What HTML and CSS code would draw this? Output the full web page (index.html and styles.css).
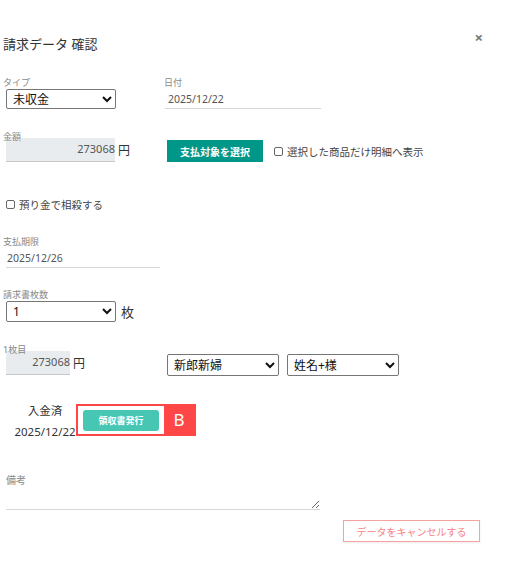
FILE: index.html
```html
<!DOCTYPE html>
<html lang="ja">
<head>
<meta charset="utf-8">
<link rel="stylesheet" href="styles.css">
</head>
<body>
<div class="modal">
  <div class="header">
    <h1 class="title">請求データ 確認</h1>
    <span class="close">×</span>
  </div>

  <div class="row row-type">
    <div class="col col-left">
      <div class="label">タイプ</div>
      <select class="sel sel-type"><option>未収金</option></select>
    </div>
    <div class="col">
      <div class="label">日付</div>
      <div class="line-input w155">2025/12/22</div>
    </div>
  </div>

  <div class="row row-amount">
    <div class="col col-left">
      <div class="label label-over">金額</div>
      <div class="amount-wrap">
        <div class="amount w109">273068</div><span class="yen">円</span>
      </div>
    </div>
    <div class="col col-btn">
      <button class="btn-green">支払対象を選択</button>
      <label class="check"><span class="box"></span>選択した商品だけ明細へ表示</label>
    </div>
  </div>

  <div class="row row-offset">
    <label class="check check-lg"><span class="box"></span>預り金で相殺する</label>
  </div>

  <div class="row row-due">
    <div class="col">
      <div class="label">支払期限</div>
      <div class="line-input w154">2025/12/26</div>
    </div>
  </div>

  <div class="row row-count">
    <div class="col">
      <div class="label">請求書枚数</div>
      <div class="amount-wrap">
        <select class="sel sel-type"><option>1</option></select><span class="yen mai">枚</span>
      </div>
    </div>
  </div>

  <div class="row row-first">
    <div class="col col-left">
      <div class="label label-over">1枚目</div>
      <div class="amount-wrap">
        <div class="amount w64">273068</div><span class="yen">円</span>
      </div>
    </div>
    <div class="col col-selects">
      <select class="sel sel-name"><option>新郎新婦</option></select>
      <select class="sel sel-name"><option>姓名+様</option></select>
    </div>
  </div>

  <div class="row row-paid">
    <div class="paid">
      <div class="paid-status">入金済</div>
      <div class="paid-date">2025/12/22</div>
    </div>
    <div class="marked">
      <div class="marked-inner"><button class="btn-receipt">領収書発行</button></div>
      <div class="marked-tag">B</div>
    </div>
  </div>

  <div class="row row-note">
    <div class="col">
      <div class="label label-note">備考</div>
      <textarea class="note"></textarea>
    </div>
  </div>

  <div class="footer">
    <button class="btn-cancel">データをキャンセルする</button>
  </div>
</div>
</body>
</html>
```
FILE: styles.css
```css
* { box-sizing: border-box; }
html, body { margin: 0; padding: 0; background: #fff; }
body {
  font-family: "Noto Sans", "Noto Sans CJK JP", sans-serif;
  color: #333;
  width: 521px;
  height: 567px;
  overflow: hidden;
}
.modal { padding: 0 0 0 3px; }

.header {
  display: flex;
  justify-content: space-between;
  align-items: flex-start;
  padding-top: 34px;
  padding-right: 38px;
}
.title {
  margin: 0;
  font-size: 13px;
  font-weight: 400;
  line-height: 20px;
  color: #333;
}
.close {
  font-size: 15px;
  line-height: 16px;
  color: #777;
  font-weight: 700;
  margin-top: -5px;
}

.row { display: flex; }
.col { display: flex; flex-direction: column; }
.col-left { width: 161px; }

.label {
  font-size: 9px;
  line-height: 12px;
  color: #888;
}
.label-over { margin-bottom: -5px; position: relative; z-index: 1; }

.row-type { margin-top: 23px; }

.sel {
  font-family: "Noto Sans", "Noto Sans CJK JP", sans-serif;
  font-size: 12px;
  color: #111;
  height: 20px;
  border: 1px solid #767676;
  border-radius: 2px;
  background: #fff;
  padding: 0 2px;
}
.sel-type { width: 110px; margin-left: 3px; }

.line-input {
  font-size: 10.5px;
  line-height: 16px;
  color: #555;
  padding: 2px 0 1px 3px;
  border-bottom: 1px solid #d6d6d6;
}
.w155 { width: 156px; margin-left: 1px; }
.w154 { width: 154px; margin-left: 3px; padding-left: 1px; }

.row-amount { margin-top: 22px; }
.amount-wrap { display: flex; align-items: center; }
.amount {
  margin-left: 3px;
  height: 24px;
  background: #e9ecef;
  border-bottom: 1px solid #c8c8c8;
  font-size: 11px;
  color: #555;
  text-align: right;
  line-height: 22px;
  padding-right: 0;
}
.w109 { width: 109px; }
.w64 { width: 64px; }
.yen { font-size: 12px; color: #333; margin-left: 3px; }
.mai { margin-left: 5px; font-size: 13px; }

.col-btn { flex-direction: row; align-items: center; padding-top: 0; }
.btn-green {
  width: 96px;
  height: 22px;
  background: #009688;
  color: #fff;
  border: 0;
  font-family: "Noto Sans CJK JP", sans-serif;
  font-size: 10px;
  font-weight: 700;
  padding: 0;
  margin-top: 9px;
  margin-left: 3px;
}
.check {
  display: flex;
  align-items: center;
  font-size: 10.5px;
  color: #444;
}
.col-btn .check { margin-left: 11px; margin-top: 9px; }
.box {
  width: 9px;
  height: 9px;
  border: 1px solid #666;
  border-radius: 2px;
  margin-right: 4px;
  background: #fff;
}
.row-offset { margin-top: 35px; padding-left: 3px; }
.check-lg { font-size: 10.5px; }

.row-due { margin-top: 24px; }
.row-count { margin-top: 21px; }
.row-count .sel-type { height: 21px; }

.row-first { margin-top: 22px; align-items: flex-start; }
.col-selects { flex-direction: row; gap: 8px; padding-top: 10px; margin-left: 3px; }
.sel-name { width: 112px; height: 22px; font-size: 12px; }

.row-paid { margin-top: 28px; align-items: flex-start; }
.paid {
  width: 62px;
  margin-left: 11px;
  margin-top: -4px;
  text-align: center;
  font-size: 11.5px;
  color: #333;
  line-height: 21px;
  white-space: nowrap;
}
.marked {
  display: flex;
  width: 120px;
  height: 32px;
  background: #ff4747;
  padding: 2px;
}
.marked-inner {
  background: #fff;
  width: 86px;
  height: 28px;
  display: flex;
  align-items: center;
  justify-content: center;
}
.btn-receipt {
  width: 76px;
  height: 21px;
  border: 0;
  border-radius: 3px;
  background: #48c6b4;
  color: #fff;
  font-family: "Noto Sans CJK JP", sans-serif;
  font-size: 9px;
  font-weight: 700;
  padding: 0;
}
.marked-tag {
  flex: 1;
  color: #fff;
  font-size: 17px;
  text-align: center;
  line-height: 28px;
}

.row-note { margin-top: 31px; }
.label-note { font-size: 10px; line-height: 14px; padding-left: 3px; }
.note {
  width: 314px;
  height: 23px;
  margin: 0 0 0 3px;
  border: 0;
  border-bottom: 1px solid #d6d6d6;
  resize: vertical;
  outline: none;
}

.footer { display: flex; padding-left: 340px; margin-top: 10px; }
.btn-cancel {
  width: 137px;
  height: 22px;
  background: #fff;
  border: 1px solid #f5a3a0;
  color: #f6837f;
  font-family: "Noto Sans CJK JP", sans-serif;
  font-size: 10px;
  padding: 0;
  box-shadow: 0 1px 2px rgba(0,0,0,0.08);
}
```
